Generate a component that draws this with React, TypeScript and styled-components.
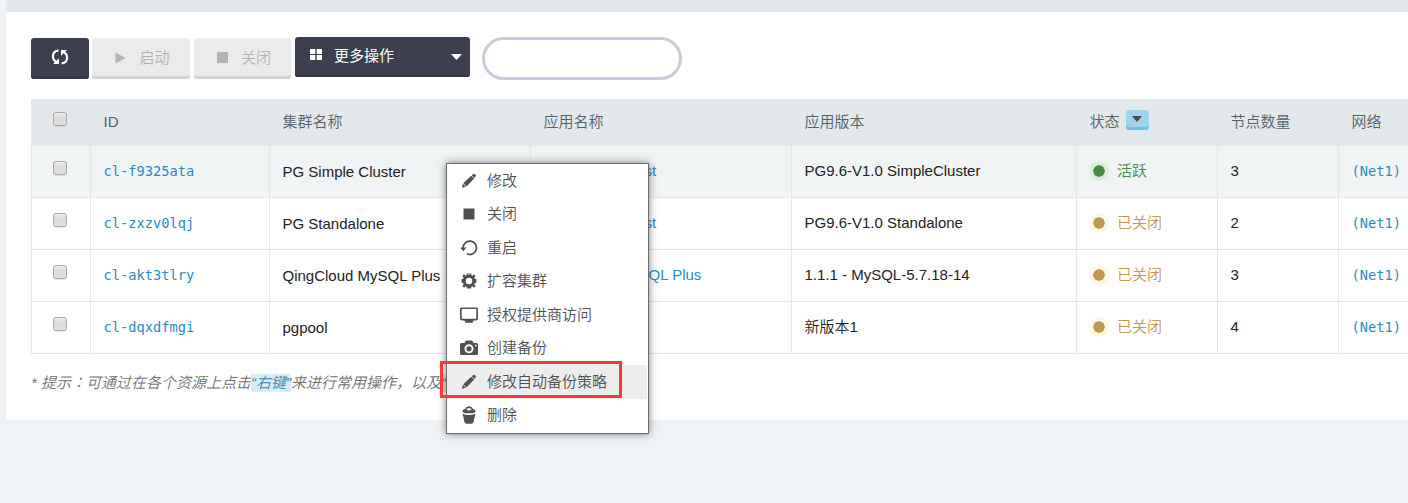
import React from "react";
import styled, { createGlobalStyle, css } from "styled-components";

const Global = createGlobalStyle`
  *, *::before { box-sizing: border-box; }
  html, body { margin: 0; height: 100%; overflow: hidden; }
  body {
    background: #eff3f6;
    color: #222;
    font: 350 15px/22px "Liberation Sans", "Noto Sans CJK SC", sans-serif;
  }
  button, input { font: inherit; margin: 0; }
`;

const Page = styled.main`
  padding-left: 6px;
  height: 503px;
`;

const TopStrip = styled.div`
  height: 12px;
  background: #e3e8eb;
`;

const Panel = styled.section`
  position: relative;
  height: 408px;
  padding: 25px 0 0 25px;
  background: #fff;
`;

const Toolbar = styled.div`
  display: flex;
  align-items: flex-start;
  height: 62px;
`;

const Button = styled.button<{ $width: number; $gap?: number; $dark?: boolean }>`
  display: flex;
  align-items: center;
  justify-content: center;
  width: ${(p) => p.$width}px;
  height: 41px;
  margin: 1px ${(p) => p.$gap ?? 0}px 0 0;
  padding: 0 0 2px;
  border: 0;
  border-radius: 3px;
  ${(p) =>
    p.$dark
      ? css`
          background: #3c3f4d;
          color: #fff;
          padding-bottom: 4px;
          box-shadow: inset 0 -3px 0 #343644;
        `
      : css`
          background: #ebebeb;
          color: #b3b3b3;
          padding-left: 3px;
          box-shadow: inset 0 -3px 0 #d4d4d4;
        `}
  svg + span { margin-left: 13px; }
`;

const MoreButton = styled(Button)`
  height: 40px;
  margin-top: 0;
  padding: 0 8px 3px 15px;
  justify-content: flex-start;
  font-weight: 400;
  box-shadow: inset 0 -2px 0 #343644;
  svg { margin-top: -2px; }
  svg + span { margin-left: 12px; }
  svg:last-child { margin: 3px 0 0 auto; }
`;

const Search = styled.input`
  width: 200px;
  height: 43px;
  padding: 0 16px;
  border: 3px solid #cccada;
  border-radius: 22px;
  background: #fff;
`;

const columns = "59px 179px 261px 261px 285px 141px 121px 80px";

const Row = styled.div<{ $active?: boolean }>`
  display: grid;
  grid-template-columns: ${columns};
  height: 52px;
  background: ${(p) => (p.$active ? "#f0f4f5" : "#fff")};
`;

const HeadRow = styled(Row)`
  height: 47px;
  background: #e3e8eb;
  color: #55606a;
`;

const HeadCell = styled.div`
  display: flex;
  align-items: center;
  gap: 6px;
  padding: 0 0 2px 13.5px;
`;

const Cell = styled.div<{ $top?: number; $bottom?: number }>`
  display: flex;
  align-items: center;
  padding: ${(p) => p.$top ?? 0}px 0 ${(p) => p.$bottom ?? 0}px 12.5px;
  border-left: 1px solid #e3e7ea;
  border-bottom: 1px solid #e3e7ea;
  white-space: nowrap;
`;

const CheckCell = styled(Cell)`
  align-items: flex-start;
  padding: 15px 0 0 21px;
`;

const HeadCheck = styled.div`
  padding: 13px 0 0 22px;
`;

const Check = styled.input.attrs({ type: "checkbox" })`
  appearance: none;
  display: block;
  width: 14px;
  height: 14px;
  border: 1px solid #aaa;
  border-radius: 3px;
  background: linear-gradient(#ededed, #dcdcdc 40%, #dedede);
  box-shadow: 0 1px 1px rgba(0, 0, 0, 0.1);
`;

const Link = styled.a<{ $mono?: boolean }>`
  color: #2a8ac4;
  ${(p) => p.$mono && css`font: 13.7px/22px "DejaVu Sans Mono", monospace;`}
`;

const Filter = styled.button`
  display: flex;
  justify-content: center;
  width: 23px;
  height: 20px;
  margin-top: -3px;
  padding: 6px 0 0;
  border: 0;
  border-radius: 3px;
  background: #9cd5f0;
  box-shadow: inset 0 -3px 0 #70c0e8;
  color: #4a4a4a;
`;

const Status = styled.span<{ $on: boolean }>`
  display: flex;
  align-items: center;
  gap: 8px;
  margin-left: -0.5px;
  color: ${(p) => (p.$on ? "#458a48" : "#c09853")};
  &::before {
    content: "";
    width: 20px;
    height: 20px;
    border: 4px solid ${(p) => (p.$on ? "#dcf0d8" : "#fcf8e3")};
    border-radius: 50%;
    background: currentColor;
    background-clip: padding-box;
  }
`;

const Hint = styled.p`
  margin: 18px 0 0;
  color: #707070;
  font-style: italic;
  white-space: nowrap;
`;

const Colon = styled.span`
  font-family: "Noto Sans CJK TC", sans-serif;
  line-height: 1;
`;

const Mark = styled.span`
  padding: 0 0 1px;
  background: #d9edf7;
  color: #3a87ad;
  line-height: 17px;
  display: inline-block;
`;

const Menu = styled.ul`
  position: absolute;
  left: 440px;
  top: 151px;
  width: 203px;
  height: 271px;
  margin: 0;
  padding: 0 1px 0 0;
  list-style: none;
  border: 1px solid #6b6b6b;
  background: #fff;
  box-shadow: 0 0 8px rgba(0, 0, 0, 0.5);
`;

const MenuItem = styled.li<{ $hover?: boolean }>`
  display: flex;
  align-items: center;
  gap: 9px;
  height: 33.5px;
  padding-left: 13px;
  background: ${(p) => (p.$hover ? "#ededed" : "transparent")};
  color: #505050;
`;

const Outline = styled.div`
  position: absolute;
  left: 434px;
  top: 349px;
  width: 182px;
  height: 37px;
  border: 3px solid #fb3838;
`;

type IconName = "pencil" | "stop" | "restart" | "gear" | "screen" | "camera" | "trash";

const drawings: Record<IconName, React.ReactNode> = {
  pencil: (
    <path d="M1.800 15.800l1.100-4 2.900 2.900zM3.300 11.200l7.900-7.400 2.900 2.700-7.600 7.900zM11.700 3.300l1.600-1.400q.7-.5 1.300 0l1.100 1.100q.5.700 0 1.300l-1.200 1.700z" />
  ),
  stop: <path d="M3.500 3.500h11v11h-11z" />,
  restart: (
    <>
      <path d="M3.100 9a6.700 6.700 0 1 1 3.700 5.800" fill="none" stroke="currentColor" strokeWidth="1.700" />
      <path d="M.2 8.500h6.200l-3.100 3.700z" />
    </>
  ),
  gear: (
    <path
      fillRule="evenodd"
      transform="translate(.9 .9) scale(.9)"
      d="M6.500 2.400V.8h2v1.500h1V.8h2v1.600l1.400.7 1.600-1.500 1.900 1.900-1.500 1.600.7 1.700h1.600v4.400h-1.600l-.7 1.700 1.500 1.600-1.900 1.900-1.600-1.500-1.400.7v1.600H6.500v-1.600l-1.400-.7-1.600 1.500-1.900-1.900 1.500-1.600-.7-1.700H.8V6.800h1.600l.7-1.700-1.500-1.600 1.900-1.900 1.600 1.500zM9 5.400a3.600 3.600 0 1 0 0 7.200 3.600 3.600 0 0 0 0-7.200z"
    />
  ),
  screen: (
    <path
      fillRule="evenodd"
      d="M1.500 1.500h15q1.500 0 1.500 1.500v9.500q0 2-2 2h-2.500l-1 2.200h-7l-1-2.200H2q-2 0-2-2V3Q0 1.500 1.500 1.500zM1.700 3v9.800h14.600V3z"
    />
  ),
  camera: (
    <path
      fillRule="evenodd"
      d="M0 5.500q0-1.500 1.500-1.500H4.500l1.300-2.500h6.400L13.500 4h3Q18 4 18 5.500v9q0 1.500-1.500 1.500h-15Q0 16 0 14.500zM9 5.300a4.500 4.500 0 1 0 0 9 4.500 4.500 0 0 0 0-9zm0 1.900a2.600 2.600 0 1 1 0 5.200 2.600 2.600 0 0 1 0-5.200zM15 5.800v1.500h1.500V5.800z"
    />
  ),
  trash: (
    <path
      fillRule="evenodd"
      d="M2.300 6Q2.600 3.200 5 3 6 .3 9 .3T13 3q2.400.2 2.700 3L13 7.300H5zM6.300 3.500q.5-1.600 2.700-1.600t2.700 1.600L9 4.800zM2.600 7.800q6.400 2.400 12.800 0L13.500 16q-.3 1.800-2 1.800h-5q-1.700 0-2-1.800z"
    />
  ),
};

const Icon = ({ name }: { name: IconName }) => (
  <svg width="18" height="18" viewBox="0 0 18 18" fill="currentColor">
    {drawings[name]}
  </svg>
);

const Caret = ({ width = 11 }: { width?: number }) => (
  <svg width={width} height="6" viewBox="0 0 10 6" preserveAspectRatio="none" fill="currentColor">
    <path d="M0 0h10L5 6z" />
  </svg>
);

const headings = ["ID", "集群名称", "应用名称", "应用版本", "状态", "节点数量", "网络"];

const clusters = [
  { id: "cl-f9325ata", name: "PG Simple Cluster", app: "PostgreSQL Test", version: "PG9.6-V1.0 SimpleCluster", on: true, nodes: 3 },
  { id: "cl-zxzv0lqj", name: "PG Standalone", app: "PostgreSQL Test", version: "PG9.6-V1.0 Standalone", on: false, nodes: 2 },
  { id: "cl-akt3tlry", name: "QingCloud MySQL Plus", app: "QingCloud MySQL Plus", version: "1.1.1 - MySQL-5.7.18-14", on: false, nodes: 3 },
  { id: "cl-dqxdfmgi", name: "pgpool", app: "", version: "新版本1", on: false, nodes: 4 },
];

const actions: { icon: IconName; label: string; hover?: boolean }[] = [
  { icon: "pencil", label: "修改" },
  { icon: "stop", label: "关闭" },
  { icon: "restart", label: "重启" },
  { icon: "gear", label: "扩容集群" },
  { icon: "screen", label: "授权提供商访问" },
  { icon: "camera", label: "创建备份" },
  { icon: "pencil", label: "修改自动备份策略", hover: true },
  { icon: "trash", label: "删除" },
];

export default function App() {
  return (
    <Page>
      <Global />
      <TopStrip />
      <Panel>
        <Toolbar>
          <Button $dark $width={58} $gap={3} aria-label="refresh">
            <svg width="18" height="18" viewBox="0 0 18 18" fill="none" stroke="currentColor" strokeWidth="2.200">
              <path d="M7.500 2.600C1 3 .300 10.500 5 14M10.500 15.400C17 15 17.700 7.500 13 4" />
              <path d="M2 16h6V10.200zM16 2h-6v5.800z" fill="currentColor" stroke="none" />
            </svg>
          </Button>
          <Button $width={98} $gap={4} disabled>
            <svg width="11" height="12" viewBox="0 0 11 12" fill="currentColor">
              <path d="M.5.5v11L10.500 6z" />
            </svg>
            <span>启动</span>
          </Button>
          <Button $width={97} $gap={4} disabled>
            <svg width="11" height="11" viewBox="0 0 11 11" fill="currentColor">
              <path d="M0 0h11v11H0z" />
            </svg>
            <span>关闭</span>
          </Button>
          <MoreButton $dark $width={175} $gap={12}>
            <svg width="12" height="11" viewBox="0 0 12 11" fill="currentColor">
              <path d="M1 0h4.300v5H0V1q0-1 1-1zM6.700 0H11q1 0 1 1v4H6.700zM0 6h5.300v5H1q-1 0-1-1zM6.700 6H12v4q0 1-1 1H6.700z" />
            </svg>
            <span>更多操作</span>
            <Caret />
          </MoreButton>
          <Search aria-label="search" />
        </Toolbar>

        <HeadRow>
          <HeadCheck>
            <Check />
          </HeadCheck>
          {headings.map((h) => (
            <HeadCell key={h}>
              {h}
              {h === "状态" && (
                <Filter aria-label="filter">
                  <Caret width={10} />
                </Filter>
              )}
            </HeadCell>
          ))}
        </HeadRow>
        {clusters.map((c) => (
          <Row key={c.id} $active={c.on}>
            <CheckCell>
              <Check />
            </CheckCell>
            <Cell $bottom={2}><Link $mono>{c.id}</Link></Cell>
            <Cell $top={1}>{c.name}</Cell>
            <Cell $bottom={1}><Link>{c.app}</Link></Cell>
            <Cell $bottom={1}>{c.version}</Cell>
            <Cell $bottom={1}><Status $on={c.on}>{c.on ? "活跃" : "已关闭"}</Status></Cell>
            <Cell $bottom={1}>{c.nodes}</Cell>
            <Cell $bottom={2}><Link $mono>(Net1)</Link></Cell>
          </Row>
        ))}

        <Hint>
          * 提示<Colon>：</Colon>可通过在各个资源上点击<Mark>“右键”</Mark>来进行常用操作，以及<Mark>“双击”</Mark>
        </Hint>

        <Menu>
          {actions.map((a) => (
            <MenuItem key={a.label} $hover={a.hover}>
              <Icon name={a.icon} />
              {a.label}
            </MenuItem>
          ))}
        </Menu>
        <Outline />
      </Panel>
    </Page>
  );
}
